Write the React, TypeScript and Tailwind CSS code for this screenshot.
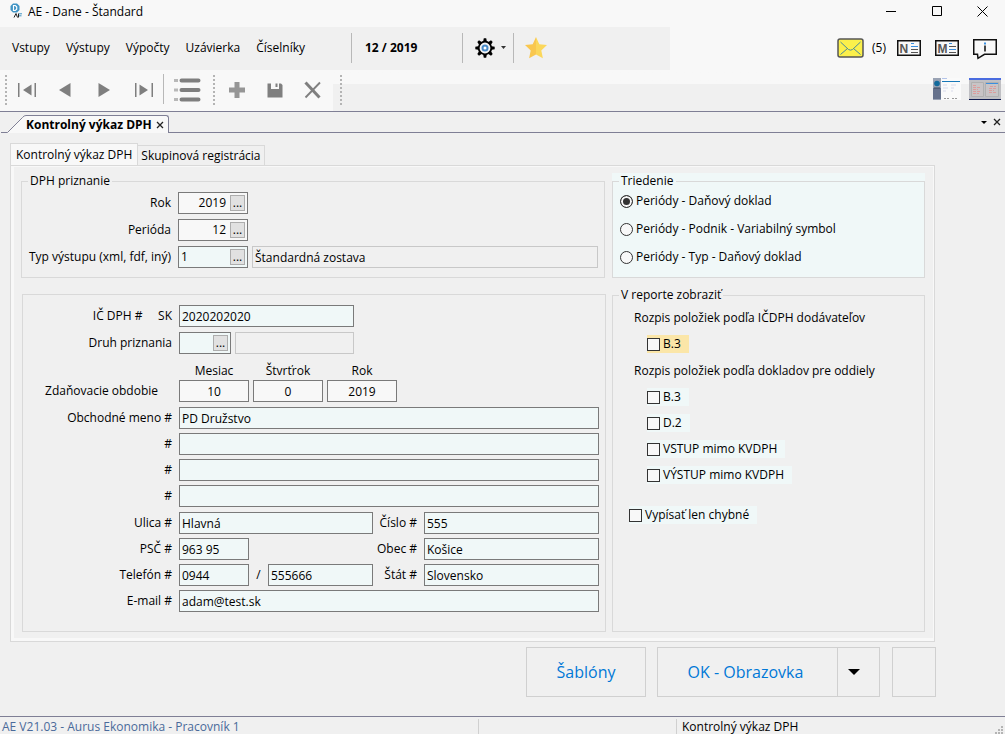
import { useState } from 'react'
import type { ReactNode } from 'react'

const MENU = ['Vstupy', 'Výstupy', 'Výpočty', 'Uzávierka', 'Číselníky']

const SORT_OPTIONS = [
  'Periódy - Daňový doklad',
  'Periódy - Podnik - Variabilný symbol',
  'Periódy - Typ - Daňový doklad',
]

/* ---------- small building blocks ---------- */

function Grip() {
  return (
    <svg width="3" height="32" viewBox="0 0 3 32" className="shrink-0">
      {[0, 4, 8, 12, 16, 20, 24, 28].map(y => (
        <rect key={y} x="0" y={y + 1} width="2" height="2" fill="#b4b4b4" />
      ))}
    </svg>
  )
}

function Separator() {
  return <div className="h-[30px] w-px shrink-0 bg-[#b8b8b8]" />
}

interface FieldProps {
  id: string
  value?: string
  className?: string
  label?: string
}

function TextField({ id, value = '', className = '', label }: FieldProps) {
  return (
    <input
      id={id}
      type="text"
      defaultValue={value}
      aria-label={label}
      className={`h-[22px] min-w-0 border border-[#7a7a7a] bg-[#f0f8f8] px-[2px] outline-none ${className}`}
    />
  )
}

function ReadOnlyField({ id, value = '', className = '', label }: FieldProps) {
  return (
    <input
      id={id}
      type="text"
      readOnly
      value={value}
      aria-label={label}
      className={`h-[22px] min-w-0 border border-[#c8c8c8] bg-[#f0f0f0] px-[2px] outline-none ${className}`}
    />
  )
}

function PickerField({ id, value = '', className = '', inputClass = '' }: FieldProps & { inputClass?: string }) {
  return (
    <div className={`flex h-[22px] shrink-0 items-center border border-[#7a7a7a] pr-[2px] ${className}`}>
      <input
        id={id}
        type="text"
        defaultValue={value}
        className={`w-0 flex-1 bg-transparent pl-[2px] outline-none ${inputClass}`}
      />
      <button
        type="button"
        aria-label="Vybrať"
        className="flex h-4 w-[15px] items-center justify-center border border-[#adadad] bg-[#e1e1e1] leading-[12px]"
      >
        ...
      </button>
    </div>
  )
}

function Label({
  htmlFor,
  children,
  className = 'w-[149px]',
}: {
  htmlFor?: string
  children: ReactNode
  className?: string
}) {
  return (
    <label htmlFor={htmlFor} className={`flex shrink-0 justify-end whitespace-pre ${className}`}>
      {children}
    </label>
  )
}

function PeriodField({ label, value }: { label: string; value: string }) {
  return (
    <label className="flex w-[70px] flex-col">
      {label}
      <input
        type="text"
        defaultValue={value}
        className="mt-px h-[22px] border border-[#7a7a7a] bg-[#f8f8f8] text-center outline-none"
      />
    </label>
  )
}

function CheckItem({ label, className = 'bg-[#f0f8f8]' }: { label: string; className?: string }) {
  return (
    <label className={`flex h-[18px] w-fit items-center gap-[3px] pr-2 ${className}`}>
      <input
        type="checkbox"
        className="size-[13px] appearance-none border border-[#333333] bg-[#f8f8f8] checked:bg-[#333333]"
      />
      {label}
    </label>
  )
}

/* ---------- window chrome ---------- */

function TitleBar() {
  return (
    <header className="flex h-[27px] shrink-0 items-start bg-[#f8f8f8]">
      <svg width="14" height="16" viewBox="0 0 14 16" className="mt-[3px] ml-[9px]">
        <path d="M4 0.5h4l2.5 2.5v4L8 9.500H4L1.500 7V3z" fill="#3f93c4" />
        <path d="M4.500 2.500h1.800l1.400 1.300v2.500L6.300 7.500H4.500z" fill="none" stroke="#fff" strokeWidth="1.200" />
        <path d="M5 14.500l2-4 1.500 4M9.500 14.500v-4" stroke="#222" strokeWidth="1" fill="none" />
        <path d="M10 10.800h3M10 12.800h2.500" stroke="#3f93c4" />
      </svg>
      <h1 className="mt-1 ml-[5px] flex-1">AE - Dane - Štandard</h1>
      <button type="button" aria-label="Minimalizovať" className="flex h-[23px] w-[46px] items-center justify-center">
        <svg width="11" height="11" viewBox="0 0 11 11" stroke="#000">
          <path d="M0 5.500h10" />
        </svg>
      </button>
      <button type="button" aria-label="Maximalizovať" className="flex h-[23px] w-[46px] items-center justify-center">
        <svg width="11" height="11" viewBox="0 0 11 11" stroke="#000" fill="none">
          <path d="M0.500 0.500h9v9h-9z" />
        </svg>
      </button>
      <button type="button" aria-label="Zavrieť" className="flex h-[23px] w-[45px] items-center justify-center">
        <svg width="11" height="11" viewBox="0 0 11 11" stroke="#000" fill="none">
          <path d="M0.500 0.500l10 10M10.500 0.500l-10 10" />
        </svg>
      </button>
    </header>
  )
}

function GearIcon() {
  return (
    <svg width="20" height="20" viewBox="0 0 20 20">
      {[0, 45, 90, 135, 180, 225, 270, 315].map(a => (
        <path key={a} d="M8.800 0.300h2.400l0.800 4h-4z" fill="#000" transform={`rotate(${a} 10 10)`} />
      ))}
      <circle cx="10" cy="10" r="6.300" fill="#f4f4f4" stroke="#000" strokeWidth="1.800" />
      <circle cx="10" cy="10" r="2.500" fill="#fff" stroke="#4a8cc8" strokeWidth="2" />
    </svg>
  )
}

function NewsIcon({ letter, swapped = false }: { letter: string; swapped?: boolean }) {
  return (
    <svg width="24" height="16" viewBox="0 0 24 16">
      <rect x="0.750" y="0.750" width="22.500" height="14.500" fill="#f8f8f8" stroke="#111" strokeWidth="1.500" />
      <text x="2.500" y="12.500" fontSize="12" fontWeight="900" fill="#555" fontFamily="Liberation Sans, sans-serif">
        {letter}
      </text>
      <path d="M14 3.500h3" stroke="#3a8fe0" />
      <path d="M14 6.500h7" stroke={swapped ? '#555' : '#3a8fe0'} />
      <path d="M14 9.500h7" stroke={swapped ? '#3a8fe0' : '#555'} />
      <path d="M14 12.500h7" stroke="#555" />
    </svg>
  )
}

function MenuBar() {
  return (
    <div className="flex h-[43px] shrink-0 bg-[#f8f8f8]">
      <nav className="flex w-2/3 items-center bg-[#f0f0f0] pb-[2px] pl-3">
        <div className="flex w-[339px] items-center gap-4">
          {MENU.map(item => (
            <button key={item} type="button">
              {item}
            </button>
          ))}
        </div>
        <Separator />
        <button type="button" className="w-[110px] pl-[13px] text-left font-bold">
          12 / 2019
        </button>
        <Separator />
        <button type="button" aria-label="Nastavenia" className="flex w-[50px] items-center gap-[6px] pl-3">
          <GearIcon />
          <svg width="5" height="3" viewBox="0 0 5 3">
            <path d="M0 0h5L2.500 3z" fill="#333" />
          </svg>
        </button>
        <Separator />
        <button type="button" aria-label="Obľúbené" className="ml-[10px]">
          <svg width="24" height="24" viewBox="0 0 24 24">
            <path d="M12 1l3.300 7.200 7.700.9-5.700 5.300 1.600 7.800L12 18.400z" fill="#fbd75b" />
            <path d="M12 1L8.700 8.200 1 9.100l5.700 5.300-1.600 7.800L12 18.400z" fill="#f9c74f" />
          </svg>
        </button>
      </nav>
      <div className="flex flex-1 items-center justify-end pr-2 pb-[2px]">
        <button type="button" aria-label="Správy" className="flex items-center gap-2">
          <svg width="27" height="20" viewBox="0 0 27 20">
            <rect x="1" y="1" width="25" height="18" rx="2" fill="#fbf04b" stroke="#555" strokeWidth="1.500" />
            <path d="M3.500 4l8 7.500q2 1.300 4 0L23.500 4M3.500 16.500l7-6M23.500 16.500l-7-6" fill="none" stroke="#4a8a9a" />
          </svg>
          <span>(5)</span>
        </button>
        <button type="button" aria-label="Novinky" className="ml-[11px]">
          <NewsIcon letter="N" />
        </button>
        <button type="button" aria-label="Manuál" className="ml-[14px]">
          <NewsIcon letter="M" swapped />
        </button>
        <button type="button" aria-label="Informácie" className="ml-[14px] pt-1">
          <svg width="24" height="21" viewBox="0 0 24 21">
            <path
              d="M0.750 0.750h22.500v14.500H11.500L5 19.300l-.5-4H0.750z"
              fill="#f8f8f8"
              stroke="#111"
              strokeWidth="1.500"
            />
            <path d="M12 3.500v2" stroke="#3a8fe0" strokeWidth="2" />
            <path d="M12 6.500v6" stroke="#444" strokeWidth="2" />
          </svg>
        </button>
      </div>
    </div>
  )
}

function ToolButton({ name, className, children }: { name: string; className: string; children: ReactNode }) {
  return (
    <button
      type="button"
      aria-label={name}
      className={`flex h-8 shrink-0 items-center justify-center text-[#7f7f7f] ${className}`}
    >
      {children}
    </button>
  )
}

function ToolBar() {
  return (
    <div className="flex h-[42px] shrink-0 border-b border-[#7f7f95]">
      <div className="flex items-start bg-[#f8f8f8] pt-[4px] pl-[5px]">
        <Grip />
        <ToolButton name="Prvý" className="w-[38px]">
          <svg width="20" height="16" viewBox="0 0 20 16" fill="currentColor">
            <path d="M1 1h1.500v14H1zM17.500 1H19v14h-1.500zM14.500 2.500v11L6 8z" />
          </svg>
        </ToolButton>
        <ToolButton name="Predchádzajúci" className="w-[38px]">
          <svg width="14" height="14" viewBox="0 0 14 14" fill="currentColor">
            <path d="M12.500 0v14L1 7z" />
          </svg>
        </ToolButton>
        <ToolButton name="Ďalší" className="w-10">
          <svg width="14" height="14" viewBox="0 0 14 14" fill="currentColor">
            <path d="M1.500 0v14L13 7z" />
          </svg>
        </ToolButton>
        <ToolButton name="Posledný" className="w-[39px]">
          <svg width="20" height="16" viewBox="0 0 20 16" fill="currentColor">
            <path d="M1 1h1.500v14H1zM17.500 1H19v14h-1.500zM5.500 2.500v11L14 8z" />
          </svg>
        </ToolButton>
        <Separator />
        <ToolButton name="Zoznam" className="w-[45px]">
          <svg width="28" height="26" viewBox="0 0 28 26">
            <path d="M1 3.500h4M1 13h4M1 22.500h4" stroke="#b8b8b8" strokeWidth="3" />
            <path d="M8.500 3.500h17M8.500 13h17M8.500 22.500h17" stroke="#7f7f7f" strokeWidth="4" strokeLinecap="round" />
          </svg>
        </ToolButton>
        <div className="ml-1">
          <Grip />
        </div>
        <ToolButton name="Pridať" className="ml-[2px] w-[38px]">
          <svg width="18" height="18" viewBox="0 0 18 18" fill="#969696">
            <path d="M6.500 1h5v5.500H17v5h-5.500V17h-5v-5.500H1v-5h5.500z" />
          </svg>
        </ToolButton>
        <ToolButton name="Uložiť" className="w-[37px]">
          <svg width="16" height="16" viewBox="0 0 16 16" fill="currentColor">
            <path d="M0.500 1.500h3.500V7h8V1.500h2l1.500 1.500v12.500h-15z" />
            <path d="M8.500 1.500h2V5h-2z" />
          </svg>
        </ToolButton>
        <ToolButton name="Zrušiť" className="w-10">
          <svg width="18" height="18" viewBox="0 0 18 18" stroke="currentColor" fill="none">
            <path d="M1.500 1.500l14 15" strokeWidth="3" />
            <path d="M16 1.500L1.500 16.500" strokeWidth="1.800" />
          </svg>
        </ToolButton>
      </div>
      <div className="flex-1 bg-linear-to-b from-[#f8f8f8] from-[14px] to-[#f0f0f0] to-[14px] pt-[4px] pl-[7px]">
        <div className="flex items-start justify-between">
          <Grip />
          <div className="flex items-start gap-2 pt-1 pr-1">
            <button type="button" aria-label="Prihlásenie">
              <svg width="28" height="22" viewBox="0 0 28 22">
                <path d="M0 0h28v22H0z" fill="#fafafa" />
                <path d="M0 0h8v22H0z" fill="#9aa3b4" />
                <path d="M0 10h8v11H0z" fill="#66728c" />
                <circle cx="4" cy="5.500" r="2.800" fill="#126a9c" />
                <path d="M1 10h6" stroke="#39475f" />
                <path d="M9 0.500h5" stroke="#b4c4ea" />
                <path d="M9 3.500h18" stroke="#1978b8" />
                <path d="M10 7h4M10 10h5M10 13h3M18 7h5M18 10h3M18 13h2" stroke="#d8daea" />
                <path d="M11 20.500h6M19 20.500h6" stroke="#999" strokeDasharray="2 1" />
              </svg>
            </button>
            <button type="button" aria-label="Pracovná plocha">
              <svg width="32" height="22" viewBox="0 0 32 22">
                <path d="M0 0h32v22H0z" fill="#c0c0c4" />
                <path d="M0 1h32" stroke="#4a6ce0" strokeWidth="2" />
                <path d="M0 21.500h32" stroke="#101c50" />
                <path d="M2.500 4.500h12v14h-12zM16.500 4.500h13v14h-13z" fill="#c8c4c6" stroke="#b0b0b0" />
                <path d="M17 5.500h12" stroke="#3a8fe0" />
                <path
                  d="M4 7.500h4M4 9.500h7M4 11.500h5M4 13.500h8M4 15.500h6M21 8.500h6M20 10.500h7M20 12.500h5M20 14.500h7"
                  stroke="#dc9c9c"
                  strokeDasharray="3 1"
                />
              </svg>
            </button>
          </div>
        </div>
      </div>
    </div>
  )
}

function DocumentTabs() {
  return (
    <div className="flex h-[21px] shrink-0 items-end">
      <svg width="26" height="18" viewBox="0 0 26 18">
        <path d="M8 17.500L22.500 2.500Q24 0.500 26 0.500V18H7z" fill="#f8f8f8" />
        <path d="M1 17.500h6.500L22.500 2.500Q24 0.500 26 0.500" fill="none" stroke="#7f7f95" />
      </svg>
      <div className="flex h-[18px] items-center gap-1 rounded-tr-[3px] border-t border-r border-[#7f7f95] bg-[#f8f8f8] pr-1">
        <span className="font-bold">Kontrolný výkaz DPH</span>
        <button type="button" aria-label="Zavrieť záložku">
          <svg width="8" height="8" viewBox="0 0 8 8" stroke="#222" strokeWidth="1.300">
            <path d="M1 1l6 6M7 1L1 7" />
          </svg>
        </button>
      </div>
      <div className="flex h-[21px] flex-1 items-center justify-end gap-[6px] border-b border-[#7f7f95] pr-1">
        <button type="button" aria-label="Zoznam záložiek">
          <svg width="6" height="3" viewBox="0 0 6 3">
            <path d="M0 0h6L3 3z" fill="#000" />
          </svg>
        </button>
        <button type="button" aria-label="Zavrieť okno">
          <svg width="8" height="8" viewBox="0 0 8 8" stroke="#222" strokeWidth="1.300">
            <path d="M1 1l6 6M7 1L1 7" />
          </svg>
        </button>
      </div>
    </div>
  )
}

/* ---------- form groups ---------- */

function ReturnGroup() {
  return (
    <fieldset className="mr-px h-[105px] min-w-0 border border-[#d9d9d9] pr-[6px]">
      <legend className="ml-[6px] h-4 px-[2px]">DPH priznanie</legend>
      <div className="flex flex-col gap-[5px] pt-[3px]">
        <div className="flex items-center gap-[7px]">
          <Label htmlFor="rok">Rok</Label>
          <PickerField id="rok" value="2019" className="w-[70px] bg-[#f8f8f8]" inputClass="pr-1 text-right" />
        </div>
        <div className="flex items-center gap-[7px]">
          <Label htmlFor="perioda">Perióda</Label>
          <PickerField id="perioda" value="12" className="w-[70px] bg-[#f8f8f8]" inputClass="pr-1 text-right" />
        </div>
        <div className="flex items-center gap-[7px]">
          <Label htmlFor="typ">Typ výstupu (xml, fdf, iný)</Label>
          <div className="flex flex-1 gap-1">
            <PickerField id="typ" value="1" className="w-[70px] bg-[#f0f8f8]" />
            <ReadOnlyField id="typ-nazov" label="Názov výstupu" value="Štandardná zostava" className="flex-1" />
          </div>
        </div>
      </div>
    </fieldset>
  )
}

function TaxpayerGroup() {
  return (
    <fieldset className="mt-4 ml-px min-w-0 flex-1 border border-[#d9d9d9] pr-[6px]">
      <div className="flex flex-col gap-[5px] pt-[10px]">
        <div className="flex items-center gap-[7px]">
          <Label htmlFor="ic-dph">{'IČ DPH #     SK'}</Label>
          <TextField id="ic-dph" value="2020202020" className="w-[175px]" />
        </div>
        <div className="flex items-center gap-[7px]">
          <Label htmlFor="druh">Druh priznania</Label>
          <div className="flex gap-1">
            <PickerField id="druh" className="w-[52px] bg-[#f0f8f8]" />
            <ReadOnlyField id="druh-nazov" label="Názov druhu" className="w-[119px]" />
          </div>
        </div>

        <div className="flex items-end gap-[7px] pt-1">
          <div className="flex h-[22px] w-[149px] items-center justify-end pr-[14px]">Zdaňovacie obdobie</div>
          <div className="flex gap-[4px] text-center">
            <PeriodField label="Mesiac" value="10" />
            <PeriodField label="Štvrťrok" value="0" />
            <PeriodField label="Rok" value="2019" />
          </div>
        </div>

        <div className="flex flex-col gap-1">
          {['Obchodné meno #', '#', '#', '#'].map((label, i) => (
            <div key={i} className="flex items-center gap-[7px]">
              <Label htmlFor={`meno-${i}`}>{label}</Label>
              <TextField id={`meno-${i}`} value={i === 0 ? 'PD Družstvo' : ''} className="flex-1" />
            </div>
          ))}
        </div>

        <div className="grid grid-cols-[149px_minmax(0,1fr)_37px_175px] items-center gap-x-[7px] gap-y-1">
          <Label htmlFor="ulica">Ulica #</Label>
          <TextField id="ulica" value="Hlavná" />
          <Label htmlFor="cislo" className="w-full">Číslo #</Label>
          <TextField id="cislo" value="555" />

          <Label htmlFor="psc">PSČ #</Label>
          <TextField id="psc" value="963 95" className="w-[70px]" />
          <Label htmlFor="obec" className="w-full">Obec #</Label>
          <TextField id="obec" value="Košice" />

          <Label htmlFor="telefon">Telefón #</Label>
          <div className="flex items-center">
            <TextField id="telefon" value="0944" className="w-[70px] shrink-0" />
            <span className="w-[19px] shrink-0 text-center">/</span>
            <TextField id="telefon-cislo" label="Telefónne číslo" value="555666" className="w-0 flex-1" />
          </div>
          <Label htmlFor="stat" className="w-full">Štát #</Label>
          <TextField id="stat" value="Slovensko" />

          <Label htmlFor="email">E-mail #</Label>
          <TextField id="email" value="adam@test.sk" className="col-span-3" />
        </div>
      </div>
    </fieldset>
  )
}

function SortGroup() {
  const [sort, setSort] = useState(0)

  return (
    <div className="bg-[#f0f8f8]">
      <fieldset className="h-[105px] min-w-0 border border-[#d9d9d9]">
        <legend className="ml-[6px] h-4 px-[2px]">Triedenie</legend>
        <div className="flex flex-col gap-3 pt-1 pl-[7px]">
          {SORT_OPTIONS.map((option, i) => (
            <label key={option} className="flex items-center gap-[3px]">
              <input
                type="radio"
                name="triedenie"
                checked={sort === i}
                onChange={() => setSort(i)}
                className="size-[13px] appearance-none rounded-full border border-[#333333] bg-[#f8f8f8] checked:bg-[#333333] checked:shadow-[inset_0_0_0_2px_#f8f8f8]"
              />
              {option}
            </label>
          ))}
        </div>
      </fieldset>
    </div>
  )
}

function ReportGroup() {
  return (
    <fieldset className="mt-[9px] min-w-0 flex-1 border border-[#d9d9d9]">
      <legend className="ml-[6px] h-4 px-[2px]">V reporte zobraziť</legend>
      <div className="pt-[7px] pl-4">
        <p className="pl-[5px]">Rozpis položiek podľa IČDPH dodávateľov</p>
        <div className="mt-[9px] pl-[18px]">
          <CheckItem label="B.3" className="bg-[#fbe6a8]" />
        </div>
        <p className="mt-[10px] pl-[5px]">Rozpis položiek podľa dokladov pre oddiely</p>
        <div className="mt-[9px] flex flex-col gap-2 pl-[18px]">
          <CheckItem label="B.3" />
          <CheckItem label="D.2" />
          <CheckItem label="VSTUP mimo KVDPH" />
          <CheckItem label="VÝSTUP mimo KVDPH" />
        </div>
        <div className="mt-[22px]">
          <CheckItem label="Vypísať len chybné" />
        </div>
      </div>
    </fieldset>
  )
}

function ActionButtons() {
  return (
    <div className="mt-[5px] flex h-[50px] shrink-0 justify-end text-base text-[#0078d7]">
      <button type="button" className="w-[120px] border border-[#d0d0d0]">
        Šablóny
      </button>
      <button type="button" className="ml-[11px] w-[181px] border border-[#d0d0d0] pr-1">
        OK - Obrazovka
      </button>
      <button
        type="button"
        aria-label="Ďalšie možnosti"
        className="flex w-[42px] items-center justify-center border border-l-0 border-[#d0d0d0] pr-[10px]"
      >
        <svg width="12" height="6" viewBox="0 0 12 6">
          <path d="M0 0h12L6 6z" fill="#000" />
        </svg>
      </button>
      <button type="button" aria-label="Voliteľné" className="ml-3 w-11 border border-[#d0d0d0]" />
    </div>
  )
}

function StatusBar() {
  return (
    <footer className="flex h-[18px] shrink-0 items-end border-t border-[#7f7f95]">
      <div className="h-[15px] w-[478px] pl-[2px] leading-[15px] text-[#4a6a9a]">
        AE V21.03 - Aurus Ekonomika - Pracovník 1
      </div>
      <div className="h-[15px] w-[198px] border-l border-[#d0d0d0]" />
      <div className="h-[15px] flex-1 border-l border-[#d0d0d0] pl-[5px] leading-[15px]">Kontrolný výkaz DPH</div>
      <svg width="10" height="8" viewBox="0 0 10 8" fill="#b4b4b4">
        <path d="M6 0h2v2H6zM3 3h2v2H3zM6 3h2v2H6zM0 6h2v2H0zM3 6h2v2H3zM6 6h2v2H6z" />
      </svg>
    </footer>
  )
}

export default function App() {
  return (
    <div className="flex min-h-screen flex-col bg-[#f0f0f0] font-['Open_Sans',sans-serif] text-[12px] leading-4 text-black">
      <TitleBar />
      <MenuBar />
      <ToolBar />
      <DocumentTabs />

      <main className="flex flex-1 flex-col pt-[10px] pr-[69px] pb-[19px] pl-[10px]">
        <div role="tablist" className="flex h-[22px] shrink-0 items-end">
          <button
            type="button"
            role="tab"
            aria-selected="true"
            className="h-[22px] border border-b-0 border-[#d9d9d9] bg-[#f8f8f8] px-[5px]"
          >
            Kontrolný výkaz DPH
          </button>
          <button
            type="button"
            role="tab"
            aria-selected="false"
            className="h-5 border border-b-0 border-l-0 border-[#d9d9d9] px-[3px]"
          >
            Skupinová registrácia
          </button>
        </div>

        <div className="mr-px flex flex-1 flex-col border border-[#d9d9d9]">
          <div className="flex flex-1 gap-[6px] border-t border-r border-b-[3px] border-l-[3px] border-[#f8f8f8] pt-[6px] pr-2 pb-[6px] pl-[7px]">
            <div className="flex min-w-0 flex-1 flex-col">
              <ReturnGroup />
              <TaxpayerGroup />
            </div>
            <div className="flex w-[313px] shrink-0 flex-col">
              <SortGroup />
              <ReportGroup />
            </div>
          </div>
        </div>

        <ActionButtons />
      </main>

      <StatusBar />
    </div>
  )
}
